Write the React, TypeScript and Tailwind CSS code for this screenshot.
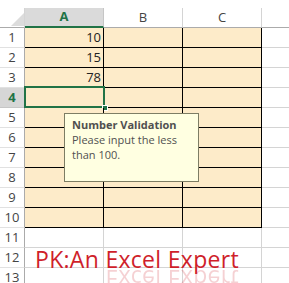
import React from "react";

const FILL = "bg-[#fdebc9]";
const font = { fontFamily: '"Open Sans", "Liberation Sans", sans-serif' };

function RowHeader({ n, selected }: { n: number; selected?: boolean }) {
  return (
    <div
      className={
        "w-[25px] shrink-0 h-full flex items-center justify-center border-r border-b text-[13px] " +
        (selected
          ? "bg-[#d6d6d6] border-r-[#9b9b9b] border-b-[#c6c6c6] text-[#217346] font-bold"
          : "bg-white border-r-[#ababab] border-b-[#e1e1e1] text-[#444]")
      }
    >
      {n}
    </div>
  );
}

export default function App() {
  const values: Record<number, string> = { 1: "10", 2: "15", 3: "78" };
  const rows = Array.from({ length: 13 }, (_, i) => i + 1);
  return (
    <div className="relative w-[289px] h-[283px] overflow-hidden bg-white" style={font}>
      <div className="h-[8px]" />
      {/* column headers */}
      <div className="flex h-[20px]">
        <div className="relative w-[25px] shrink-0 h-full border-r border-b border-r-[#d4d4d4] border-b-[#ababab] bg-white">
          <svg className="absolute left-[11px] top-[5px]" width="13" height="13" viewBox="0 0 13 13">
            <polygon points="13,0 13,13 0,13" fill="#dcdcdc" />
          </svg>
        </div>
        <div className="w-[79px] shrink-0 h-full flex items-center justify-center bg-[#dadada] border-r border-r-[#c6c6c6] border-b-2 border-b-[#217346] text-[13px] font-bold text-[#217346]">
          A
        </div>
        <div className="w-[79px] shrink-0 h-full flex items-center justify-center bg-white border-r border-b border-r-[#d4d4d4] border-b-[#ababab] text-[13px] text-[#444]">
          B
        </div>
        <div className="w-[79px] shrink-0 h-full flex items-center justify-center bg-white border-r border-b border-r-[#d4d4d4] border-b-[#ababab] text-[13px] text-[#444]">
          C
        </div>
        <div className="flex-1 h-full bg-white border-b border-b-[#ababab]" />
      </div>
      {rows.map((r) => {
        const inRange = r <= 10;
        const cellCls = inRange
          ? `${FILL} border-r border-b border-black`
          : "bg-white border-r border-b border-[#d4d4d4]";
        return (
          <div key={r} className="flex h-[20px]">
            <RowHeader n={r} selected={r === 4} />
            <div className={`relative w-[79px] shrink-0 h-full flex items-center justify-end pr-[2px] text-[13px] text-[#222] ${cellCls}`}>
              {values[r]}
              {r === 4 && (
                <div className="absolute left-[-1px] top-[-2px] w-[81px] h-[22px] border-2 border-[#217346]">
                  <div className="absolute right-[-5px] bottom-[-5px] w-[6px] h-[6px] bg-[#217346] border border-white" />
                </div>
              )}
              {r === 12 && (
                <div className="absolute left-[10px] top-[-2px] whitespace-nowrap">
                  <div className="text-[23px] leading-[26px] text-[#cf1f2b] tracking-[0.3px]">PK:An Excel Expert</div>
                  <div
                    aria-hidden="true"
                    className="text-[23px] leading-[26px] text-[#cf1f2b] tracking-[0.3px] opacity-20 blur-[0.6px] -scale-y-100 -mt-[6px]"
                  >
                    PK:An Excel Expert
                  </div>
                </div>
              )}
            </div>
            <div className={`w-[79px] shrink-0 h-full ${cellCls}`} />
            <div className={`w-[79px] shrink-0 h-full ${cellCls}`} />
            <div className="flex-1 h-full bg-white border-b border-[#d4d4d4]" />
          </div>
        );
      })}
      {/* validation input message */}
      <div className="absolute left-[64px] top-[113px] w-[135px] h-[69px] bg-[#ffffe1] border border-[#7d7d64] px-[7px] pt-[3px] text-[11px] leading-[15px] text-[#505050]">
        <div className="font-bold">Number Validation</div>
        <div>Please input the less</div>
        <div>than 100.</div>
      </div>
    </div>
  );
}
